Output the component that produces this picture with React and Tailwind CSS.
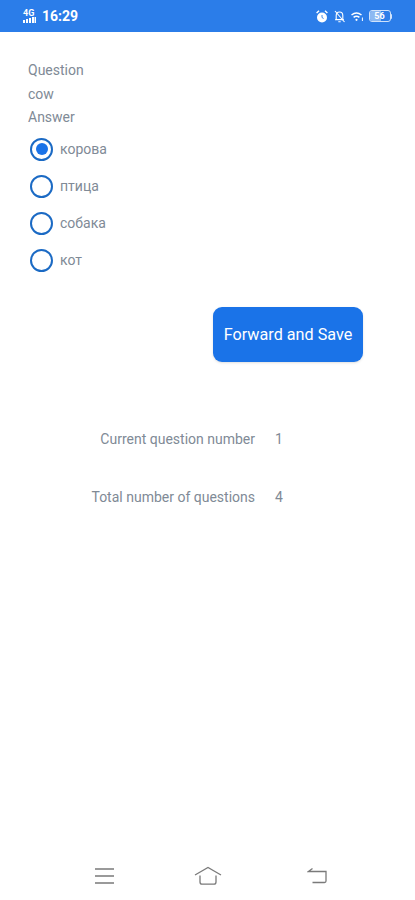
import React from "react"

const options = [
  { label: "корова", checked: true },
  { label: "птица", checked: false },
  { label: "собака", checked: false },
  { label: "кот", checked: false },
]

const stats = [
  { label: "Current question number", value: "1" },
  { label: "Total number of questions", value: "4" },
]

const StatusBar = () => (
  <div className="flex h-8 items-center justify-between bg-[#2b7de9] pl-[23px] pr-[23px] text-white">
    <div className="flex items-center gap-[6px]">
      <div className="flex w-[13px] flex-col items-start">
        <span className="font-['Roboto',sans-serif] text-[9px] font-bold leading-[7px]">4G</span>
        <svg width="13" height="6" viewBox="0 0 13 6" fill="#fff">
          <rect x="0" y="3" width="2" height="3" />
          <rect x="3" y="2" width="2" height="4" />
          <rect x="6" y="1" width="2" height="5" />
          <rect x="9" y="0" width="2" height="6" />
          <rect x="11.5" y="0" width="1.5" height="6" />
        </svg>
      </div>
      <span className="font-['Roboto',sans-serif] text-[14px] font-bold leading-none">16:29</span>
    </div>
    <div className="flex items-center gap-[6px]">
      <svg width="12" height="13" viewBox="0 0 12 13" fill="#fff">
        <circle cx="6" cy="7.5" r="5" />
        <path d="M.6 3 3 .8M11.4 3 9 .8" stroke="#fff" strokeWidth="1.4" />
        <path d="M6 5v2.5l1.6 1" stroke="#2b7de9" strokeWidth="0.9" fill="none" />
      </svg>
      <svg width="11" height="13" viewBox="0 0 11 13" fill="none" stroke="#fff" strokeWidth="1.1">
        <path d="M2.2 9.5V5.5C2.2 3.3 3.6 2 5.5 2S8.8 3.3 8.8 5.5v4zM1 9.8h9M4.3 11.8h2.4" />
        <path d="M1 1 10.5 12" />
      </svg>
      <svg width="12" height="11" viewBox="0 0 12 11" fill="none" stroke="#fff" strokeWidth="1.5">
        <path d="M.5 4C3.5 1.6 7.5 1.6 10.5 4" />
        <path d="M2.6 6.4C4.4 5 6.6 5 8.4 6.4" />
        <circle cx="5.5" cy="8.8" r="1.1" fill="#fff" stroke="none" />
        <path d="M11.4 6.5v3.5" strokeWidth="1" />
      </svg>
      <div className="flex items-center">
        <div className="relative flex h-[12px] w-[22px] items-center justify-center overflow-hidden rounded-[3px] border border-[#cfe2fb]">
          <div className="absolute inset-y-0 left-0 w-[56%] bg-[#8db9f2]" />
          <span className="relative font-['Roboto',sans-serif] text-[9px] font-bold leading-none">56</span>
        </div>
        <div className="h-[5px] w-[1.5px] rounded-r-sm bg-[#cfe2fb]" />
      </div>
    </div>
  </div>
)

const Radio = ({ label, checked }) => (
  <div className="flex h-[37px] items-center">
    <div className="ml-[2px] flex h-[23px] w-[23px] items-center justify-center rounded-full border-[2.5px] border-[#1b6ac4]">
      {checked && <div className="h-[12px] w-[12px] rounded-full bg-[#1a73e8]" />}
    </div>
    <span className="ml-[7px]">{label}</span>
  </div>
)

const BottomNav = () => (
  <div className="flex h-[50px] items-start pt-[17px] pl-[94px]">
    <svg width="21" height="18" viewBox="0 0 21 18" fill="none" stroke="#7a7a7a" strokeWidth="1.3">
      <path d="M1 2h19M1 9h19M1 16h19" />
    </svg>
    <svg className="ml-[79px] -mt-[1px]" width="28" height="20" viewBox="0 0 28 20" fill="none" stroke="#7a7a7a" strokeWidth="1.3">
      <path d="M1 9 14 1.5 27 9" />
      <path d="M6 9.5V16c0 1.5.8 2.2 2.2 2.2h11.6c1.4 0 2.2-.7 2.2-2.2V9.5" />
    </svg>
    <svg className="ml-[85px]" width="20" height="18" viewBox="0 0 20 18" fill="none" stroke="#7a7a7a" strokeWidth="1.3">
      <path d="M5.5 1.5 1.5 4.5H19v9.5c0 1-.5 1.5-1.5 1.5H5.5" />
    </svg>
  </div>
)

export default function App() {
  return (
    <div className="flex h-[900px] flex-col bg-white font-['Roboto',sans-serif] text-[14px] text-[#808a96]">
      <StatusBar />
      <div className="flex-1">
        <div className="px-7 pt-[27px]">
          <div className="leading-[23.5px]">Question</div>
          <div className="leading-[23.5px]">cow</div>
          <div className="leading-[23.5px]">Answer</div>
        </div>
        <div className="mt-[1px] px-7">
          {options.map((o) => (
            <Radio key={o.label} label={o.label} checked={o.checked} />
          ))}
        </div>
        <div className="mt-[28px] flex justify-end pr-[52px]">
          <button className="h-[55px] w-[150px] rounded-[9px] bg-[#1a73e8] pt-[2px] text-[16.2px] text-white shadow-sm">
            Forward and Save
          </button>
        </div>
        <div className="mt-[68px] flex flex-col gap-[38px]">
          {stats.map((s) => (
            <div key={s.label} className="flex h-[20px] items-center">
              <span className="w-[255px] text-right">{s.label}</span>
              <span className="ml-[20px]">{s.value}</span>
            </div>
          ))}
        </div>
      </div>
      <BottomNav />
    </div>
  )
}
